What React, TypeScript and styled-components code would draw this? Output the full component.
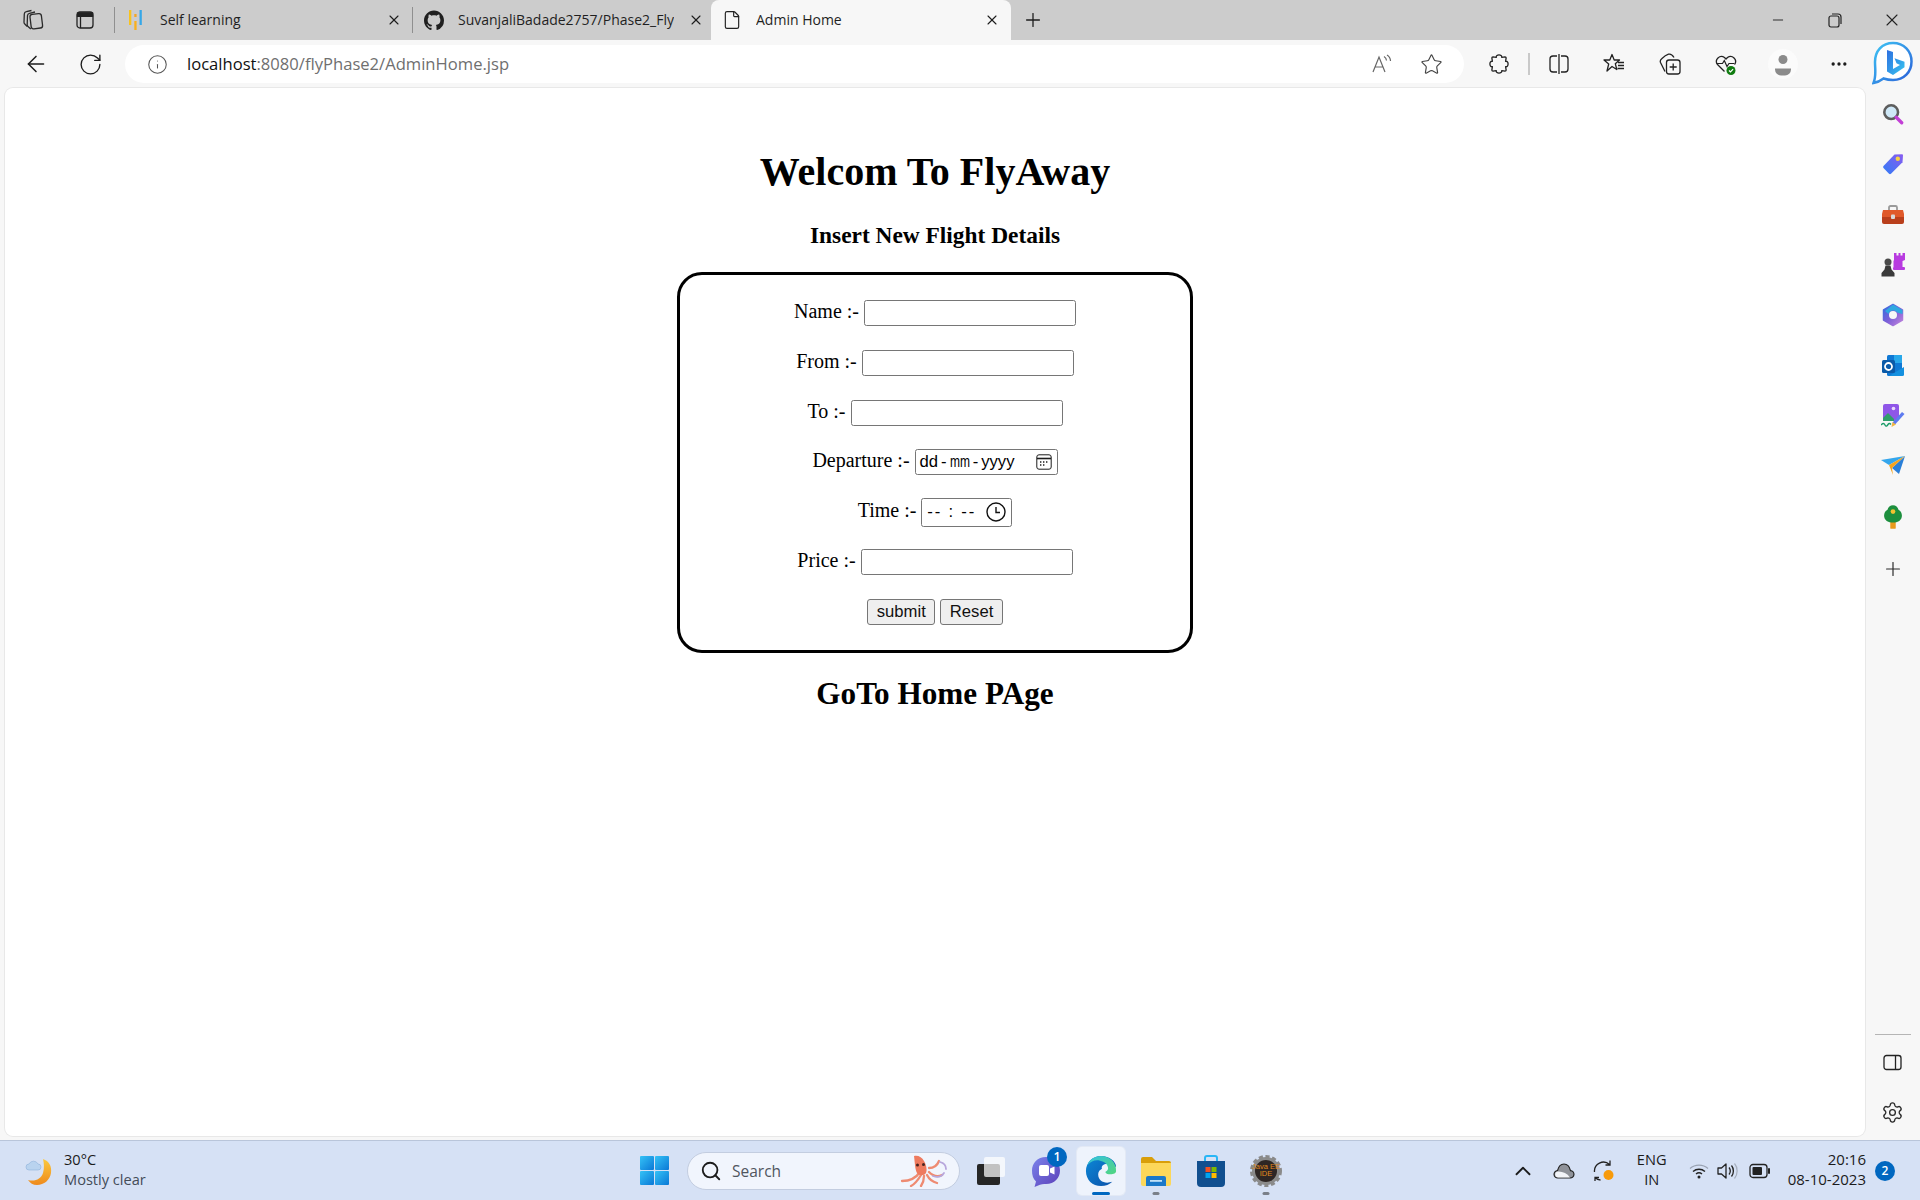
import React from "react";
import styled, { createGlobalStyle } from "styled-components";
import {
  ArrowLeft,
  RotateCw,
  Info,
  Star,
  MoreHorizontal,
  Plus,
  X,
  Minus,
  ChevronUp,
  Settings,
  Search,
  File,
} from "lucide-react";

const GlobalStyle = createGlobalStyle`
  html, body { margin: 0; padding: 0; height: 100%; }
  body { font-family: "Open Sans", "Noto Sans", sans-serif; background: #f7f7f7; overflow: hidden; }
`;

const Screen = styled.div`
  width: 1920px;
  height: 1200px;
  display: flex;
  flex-direction: column;
  background: #f7f7f7;
`;

/* ---- tab strip ---- */
const TabStrip = styled.div`
  height: 40px;
  background: #cccccc;
  display: flex;
  align-items: stretch;
  padding-left: 7px;
  flex-shrink: 0;
`;

const Slot = styled.div<{ $w: number }>`
  width: ${(p) => p.$w}px;
  flex-shrink: 0;
  display: flex;
  align-items: center;
  justify-content: center;
  color: #1c1c1c;
`;

const TabDivider = styled.div`
  width: 1px;
  height: 26px;
  margin: 7px 0 0;
  background: #8f8f8f;
  flex-shrink: 0;
`;

const Tab = styled.div<{ $active?: boolean; $w: number; $pr?: number }>`
  width: ${(p) => p.$w}px;
  flex-shrink: 0;
  display: flex;
  align-items: center;
  gap: 14px;
  padding: 0 ${(p) => p.$pr ?? 10}px 0 11px;
  box-sizing: border-box;
  border-radius: 8px 8px 0 0;
  background: ${(p) => (p.$active ? "#f7f7f7" : "transparent")};
`;

const TabIcon = styled.div`
  width: 20px;
  height: 20px;
  flex-shrink: 0;
  display: flex;
  align-items: center;
  justify-content: center;
`;

const TabTitle = styled.div`
  flex: 1;
  min-width: 0;
  padding-bottom: 2px;
  font-size: 14px;
  color: #1f1f1f;
  white-space: nowrap;
  overflow: hidden;
`;

const TabClose = styled(X)`
  flex-shrink: 0;
  color: #1c1c1c;
`;

const StripFill = styled.div`
  flex: 1;
`;

const WindowControl = styled(Slot)`
  color: #222222;
`;

/* ---- address toolbar ---- */
const Toolbar = styled.div`
  height: 48px;
  display: flex;
  align-items: center;
  padding-left: 8px;
  flex-shrink: 0;
`;

const AddressBar = styled.div`
  width: 1339px;
  height: 38px;
  margin: 0 7px 0 7px;
  flex-shrink: 0;
  background: #ffffff;
  border-radius: 19px;
  display: flex;
  align-items: center;
  box-sizing: border-box;
  padding-left: 22px;
`;

const Url = styled.div`
  margin-left: 19px;
  padding-bottom: 2px;
  flex: 1;
  font-size: 16.6px;
  color: #6f6f6f;
  white-space: nowrap;
`;

const UrlHost = styled.span`
  color: #111111;
`;

const ToolbarRule = styled.div`
  width: 2px;
  height: 22px;
  margin: 0 1px;
  background: #c9c9c9;
  flex-shrink: 0;
`;

/* ---- middle ---- */
const Middle = styled.div`
  flex: 1;
  min-height: 0;
  display: flex;
`;

const Page = styled.main`
  flex: 1;
  min-width: 0;
  margin: 0 0 4px 5px;
  background: #ffffff;
  border-radius: 8px;
  box-shadow: 0 0 0 1px #e8e8e8;
  padding-top: 61px;
  display: flex;
  flex-direction: column;
  align-items: center;
  font-family: "Liberation Serif", "Times New Roman", serif;
  color: #000000;
`;

const Title = styled.h1`
  margin: 0;
  font-size: 40px;
  line-height: 46px;
  font-weight: 700;
`;

const SubTitle = styled.h3`
  margin: 27px 0 23px;
  font-size: 23.4px;
  line-height: 27px;
  font-weight: 700;
`;

const FormBox = styled.form`
  width: 516px;
  box-sizing: border-box;
  border: 3px solid #000000;
  border-radius: 25px;
  padding: 25px 0;
  display: flex;
  flex-direction: column;
  gap: 23.8px;
`;

const FormRow = styled.div`
  height: 26px;
  display: flex;
  justify-content: center;
  align-items: center;
  gap: 5px;
  font-size: 20px;
`;

const FieldLabel = styled.label`
  position: relative;
  top: -1.5px;
  white-space: pre;
`;

const TextField = styled.input`
  width: 212px;
  height: 26px;
  box-sizing: border-box;
  border: 1px solid #767676;
  border-radius: 2.5px;
  background: #ffffff;
  padding: 0 2px;
  margin: 0;
`;

const PickerField = styled.div<{ $w: number; $h: number }>`
  width: ${(p) => p.$w}px;
  height: ${(p) => p.$h}px;
  flex-shrink: 0;
  box-sizing: border-box;
  border: 1px solid #767676;
  border-radius: 2.5px;
  display: flex;
  align-items: center;
  justify-content: space-between;
  padding: 0 5px 0 4px;
  font-family: "Liberation Sans", Arial, sans-serif;
  font-size: 16.67px;
  white-space: pre;
`;

const DateText = styled.span`
  display: inline-flex;
  align-items: center;
  gap: 3px;
`;

const DateMonth = styled.span`
  display: inline-block;
  width: 20px;
  transform: scaleX(0.72);
  transform-origin: left center;
`;

const TimeText = styled.span`
  margin-left: 1px;
  letter-spacing: 1.8px;
`;

const FormButton = styled.button`
  height: 26px;
  box-sizing: border-box;
  border: 1px solid #767676;
  border-radius: 3px;
  background: #efefef;
  padding: 0 8.5px;
  margin: 0;
  color: #111111;
  font-family: "Liberation Sans", Arial, sans-serif;
  font-size: 16.67px;
`;

const HomeLink = styled.h2`
  margin: 24px 0 0;
  font-size: 31.2px;
  line-height: 34px;
  font-weight: 700;
`;

/* ---- sidebar ---- */
const Sidebar = styled.aside`
  width: 55px;
  flex-shrink: 0;
  padding: 1px 0 5px;
  box-sizing: border-box;
  display: flex;
  flex-direction: column;
  align-items: center;
`;

const SideItem = styled.div<{ $h?: number }>`
  height: ${(p) => p.$h ?? 50.3}px;
  width: 100%;
  display: flex;
  align-items: center;
  justify-content: center;
  color: #2a2a2a;
`;

const SideFill = styled.div`
  flex: 1;
`;

const SideRule = styled.div`
  width: 36px;
  height: 1px;
  background: #b5b5b5;
`;

/* ---- taskbar ---- */
const Taskbar = styled.footer`
  height: 60px;
  flex-shrink: 0;
  box-sizing: border-box;
  border-top: 1px solid #b9c5da;
  background: #d6e1f5;
  display: grid;
  grid-template-columns: 640px auto 1fr;
  align-items: center;
`;

const Weather = styled.div`
  display: flex;
  align-items: center;
  padding-left: 25px;
  gap: 11px;
`;

const TwoLines = styled.div<{ $align?: string; $size?: number }>`
  display: flex;
  flex-direction: column;
  gap: 2px;
  padding-bottom: 3px;
  font-size: ${(p) => p.$size ?? 14.6}px;
  line-height: 18px;
  color: #1b1b1b;
  text-align: ${(p) => p.$align ?? "left"};
  white-space: nowrap;
`;

const Muted = styled.span`
  color: #444c58;
`;

const TaskCenter = styled.div`
  display: flex;
  align-items: center;
  gap: 7px;
`;

const StartButton = styled.div`
  width: 29px;
  height: 29px;
  margin-right: 11px;
  display: flex;
`;

const SearchPill = styled.div`
  width: 273px;
  height: 38px;
  box-sizing: border-box;
  border-radius: 19px;
  background: #f1f5fd;
  border: 1px solid #c3cde0;
  display: flex;
  align-items: center;
  padding: 0 11px 0 12px;
  gap: 10px;
  font-size: 15.5px;
  color: #50565f;
`;

const SearchWord = styled.span`
  flex: 1;
`;

const TaskItem = styled.div<{ $active?: boolean }>`
  position: relative;
  width: 48px;
  height: 48px;
  border-radius: 5px;
  display: flex;
  align-items: center;
  justify-content: center;
  background: ${(p) => (p.$active ? "#eef3fc" : "transparent")};
  box-shadow: ${(p) => (p.$active ? "0 0 0 1px #e3e9f5" : "none")};
`;

const RunDot = styled.span<{ $active?: boolean }>`
  position: absolute;
  bottom: 0;
  left: 50%;
  transform: translateX(-50%);
  height: 3px;
  width: ${(p) => (p.$active ? 18 : 7)}px;
  border-radius: 2px;
  background: ${(p) => (p.$active ? "#0067c0" : "#7a7f88")};
`;

const CountBadge = styled.span`
  position: absolute;
  top: 0;
  right: 3px;
  width: 20px;
  height: 20px;
  border-radius: 50%;
  background: #0067c0;
  color: #ffffff;
  font-size: 12.5px;
  font-weight: 600;
  display: flex;
  align-items: center;
  justify-content: center;
`;

const Tray = styled.div`
  display: flex;
  align-items: center;
  justify-content: flex-end;
  padding-right: 25px;
`;

const TrayClock = styled(TwoLines)`
  margin: 0 9px 0 7px;
`;

const NotifyBadge = styled.div`
  width: 20px;
  height: 20px;
  border-radius: 50%;
  background: #0067c0;
  color: #ffffff;
  font-size: 12px;
  font-weight: 600;
  display: flex;
  align-items: center;
  justify-content: center;
`;

/* ---- drawn icons ---- */
const CollectionsIcon = () => (
  <svg width="22" height="22" viewBox="0 0 22 22" fill="none" stroke="#2a2a2a" strokeWidth="1.3">
    <rect x="8.500" y="5" width="11.500" height="14.500" rx="2.500" transform="rotate(-7 14 12)" />
    <path d="M8.800 20 6 17.500a2.500 2.500 0 0 1-.8-1.800L5.500 6.500A2.500 2.500 0 0 1 7.500 4.300L13 3" />
    <path d="M5.300 17.500 2.800 15a2.500 2.500 0 0 1-.8-1.800L2.300 5A2.500 2.500 0 0 1 4.300 2.700L9.500 1.500" />
  </svg>
);

const VerticalTabsIcon = () => (
  <svg width="18" height="18" viewBox="0 0 18 18" fill="none" stroke="#222" strokeWidth="1.3">
    <rect x="1" y="1" width="16" height="16" rx="3" />
    <path d="M1.500 1.800h15v3.500h-15z" fill="#222" />
    <path d="M4.500 5v12" />
  </svg>
);

const SelfLearningIcon = () => (
  <svg width="14" height="20" viewBox="0 0 14 20">
    <rect x="0" y="0" width="2.300" height="15" fill="#f9c31d" />
    <rect x="5.300" y="4" width="2.300" height="3" fill="#f5a623" />
    <rect x="5.300" y="11" width="2.300" height="9" fill="#f9b01d" />
    <rect x="10.500" y="0" width="2.300" height="15" fill="#35a7e8" />
  </svg>
);

const GithubMark = () => (
  <svg width="21" height="21" viewBox="0 0 16 16" fill="#1f1f1f">
    <path d="M8 0C3.58 0 0 3.58 0 8c0 3.54 2.29 6.53 5.47 7.59.4.07.55-.17.55-.38 0-.19-.01-.82-.01-1.49-2.01.37-2.53-.49-2.69-.94-.09-.23-.48-.94-.82-1.13-.28-.15-.68-.52-.01-.53.63-.01 1.08.58 1.23.82.72 1.21 1.87.87 2.33.66.07-.52.28-.87.51-1.07-1.78-.2-3.64-.89-3.64-3.95 0-.87.31-1.59.82-2.15-.08-.2-.36-1.02.08-2.12 0 0 .67-.21 2.2.82.64-.18 1.32-.27 2-.27s1.36.09 2 .27c1.53-1.04 2.2-.82 2.2-.82.44 1.1.16 1.92.08 2.12.51.56.82 1.27.82 2.15 0 3.07-1.87 3.75-3.65 3.95.29.25.54.73.54 1.48 0 1.07-.01 1.93-.01 2.2 0 .21.15.46.55.38A8.01 8.01 0 0 0 16 8c0-4.42-3.58-8-8-8z" />
  </svg>
);

const RestoreIcon = () => (
  <svg width="14" height="16" viewBox="0 0 14 16" fill="none" stroke="#222" strokeWidth="1.2">
    <rect x="1" y="4" width="10" height="11" rx="2" />
    <path d="M4 2h6a3 3 0 0 1 3 3v7" />
  </svg>
);

const ReadAloudIcon = () => (
  <svg width="22" height="20" viewBox="0 0 22 20" fill="none" stroke="#666" strokeWidth="1.2">
    <path d="M1 18 7 3l6 15M3.200 13h7.600" />
    <path d="M12 2.500c1.600 1 2.400 2.400 2.500 4M15 1c2.200 1.300 3.400 3.300 3.500 6" />
  </svg>
);

const ExtensionIcon = () => (
  <svg width="22" height="22" viewBox="0 0 20 20" fill="none" stroke="#222" strokeWidth="1.2" strokeLinejoin="round">
    <path d="M7.500 4C7 1 13 1 12.500 4L15.500 3.500Q16.500 3.500 16.500 4.500L16 7.500C19 7 19 13 16 12.500L16.500 15.500Q16.500 16.500 15.500 16.500L12.500 16C13 19 7 19 7.500 16L4.500 16.500Q3.500 16.500 3.500 15.500L4 12.500C1 13 1 7 4 7.500L3.500 4.500Q3.500 3.500 4.500 3.500Z" />
  </svg>
);

const SplitIcon = () => (
  <svg width="20" height="22" viewBox="0 0 20 22" fill="none" stroke="#222" strokeWidth="1.3">
    <path d="M8 3H4a3 3 0 0 0-3 3v10a3 3 0 0 0 3 3h4M12 3h4a3 3 0 0 1 3 3v10a3 3 0 0 1-3 3h-4" />
    <path d="M10 1v20" />
  </svg>
);

const FavoritesIcon = () => (
  <svg width="22" height="22" viewBox="0 0 22 22" fill="none" stroke="#222" strokeWidth="1.3">
    <path d="M9 1.500l2.200 5.500h5.300l-4.200 3.700 1.500 5.800-4.800-3-5 4.500 1.700-7L1 7h5.800z" strokeLinejoin="round" />
    <path d="M15 9.500h6M15 12.500h6M14.500 15.500h6.500" />
  </svg>
);

const CollectionAddIcon = () => (
  <svg width="22" height="22" viewBox="0 0 22 22" fill="none" stroke="#222" strokeWidth="1.3">
    <rect x="7.500" y="7" width="13.500" height="14" rx="2.500" />
    <path d="M14.200 10.500v7M10.700 14h7" />
    <path d="M6 18.500 1.500 9.500c-.6-1.500 0-2.800 1.200-3.800C4.500 4 7 2 9.500 1.200c2-.6 4 .8 5.500 3.300" />
  </svg>
);

const HealthIcon = () => (
  <svg width="24" height="24" viewBox="0 0 24 24" fill="none">
    <path d="M10.500 19.500 3.500 12.500a5 5 0 0 1 7-7l1.500 1.500 1.500-1.500a5 5 0 0 1 7 7" stroke="#222" strokeWidth="1.300" />
    <path d="M2.500 11.500h6l1.800-3 2.700 6 2-3h5" stroke="#222" strokeWidth="1.200" />
    <circle cx="17" cy="18.500" r="4.500" fill="#107c10" />
    <path d="m15 18.500 1.500 1.500 2.600-2.800" stroke="#fff" strokeWidth="1.200" />
  </svg>
);

const ProfileIcon = () => (
  <svg width="30" height="30" viewBox="0 0 30 30">
    <circle cx="15" cy="15" r="15" fill="#fbfbfb" />
    <circle cx="15" cy="10.500" r="4.500" fill="#8b8b8b" />
    <path d="M7 19.500h16v1a6 6 0 0 1-6 6h-4a6 6 0 0 1-6-6z" fill="#8b8b8b" />
  </svg>
);

const BingIcon = () => (
  <svg width="42" height="46" viewBox="0 0 42 46">
    <defs>
      <linearGradient id="bingRing" x1="0" y1="0" x2="1" y2="1">
        <stop offset="0" stopColor="#3fc5f4" />
        <stop offset="1" stopColor="#2a5fd8" />
      </linearGradient>
      <linearGradient id="bingB" x1="0" y1="0" x2="1" y2="1">
        <stop offset="0" stopColor="#2f6fe0" />
        <stop offset="1" stopColor="#37c6f0" />
      </linearGradient>
    </defs>
    <path d="M21 2C10 2 3 10 3 21c0 7 1.500 14-1.500 21 4-.5 8-3 10-4.500 3 1 6 1.500 9.500 1.500 11 0 18.500-8 18.500-18.500S32 2 21 2z" fill="#fff" stroke="url(#bingRing)" strokeWidth="2.500" />
    <path d="M15 9l6 2v17l7-4-3.500-1.800-2-5 10 3.600v5.500L21 34l-6-3.500z" fill="url(#bingB)" />
  </svg>
);

const SideSearch = () => (
  <svg width="22" height="22" viewBox="0 0 24 24">
    <circle cx="10" cy="10" r="7.500" fill="#cfe8f7" stroke="#5d5d5d" strokeWidth="2.800" />
    <path d="m15.500 15.500 6 6" stroke="#c23fd6" strokeWidth="3.600" strokeLinecap="round" />
  </svg>
);

const SideTag = () => (
  <svg width="22" height="22" viewBox="0 0 22 22">
    <defs>
      <linearGradient id="tagFill" x1="0" y1="1" x2="1" y2="0">
        <stop offset="0" stopColor="#2f7cf6" />
        <stop offset="1" stopColor="#8a5cf0" />
      </linearGradient>
    </defs>
    <path d="M1.500 13 12.500 1.500 20 1.200a1 1 0 0 1 1 1l-.5 7L9 20.800a1.500 1.500 0 0 1-2 0L1.500 15a1.500 1.500 0 0 1 0-2z" fill="url(#tagFill)" />
    <circle cx="15.800" cy="5.800" r="2.200" fill="#f7d046" />
  </svg>
);

const SideToolbox = () => (
  <svg width="24" height="20" viewBox="0 0 24 20">
    <path d="M8 5V2.500A1.500 1.500 0 0 1 9.500 1h5A1.500 1.500 0 0 1 16 2.500V5" fill="none" stroke="#9a9a9a" strokeWidth="1.800" />
    <path d="M2 5h20l1 4v3H1V9z" fill="#e0592a" />
    <path d="M1 12h22v5a2 2 0 0 1-2 2H3a2 2 0 0 1-2-2z" fill="#b93f1c" />
    <rect x="10" y="9.500" width="4" height="4.500" rx="1" fill="#d9d9d9" />
  </svg>
);

const SideChess = () => (
  <svg width="24" height="24" viewBox="0 0 24 24">
    <path d="M13 0h2.500v2.500h2V0h2v2.500h2V0H24v7l-2.500 1v6h-9V8L13 7z" fill="#b83be0" />
    <rect x="12" y="14" width="12" height="3" rx="1" fill="#b83be0" />
    <circle cx="7" cy="9" r="3.500" fill="#4a4a4a" />
    <path d="M4.500 12.500h5l1 4 3 3.500v3.500H.5V20l3-3.500z" fill="#3a3a3a" />
  </svg>
);

const SideOffice = () => (
  <svg width="22" height="24" viewBox="0 0 22 24" fill="none">
    <defs>
      <linearGradient id="officeRing" x1="0" y1="0" x2="1" y2="1">
        <stop offset="0" stopColor="#2f6fe0" />
        <stop offset=".5" stopColor="#7d5fd8" />
        <stop offset="1" stopColor="#c486dc" />
      </linearGradient>
    </defs>
    <path d="M11 1.500 20.500 7v10L11 22.500 1.500 17V7z" fill="url(#officeRing)" stroke="url(#officeRing)" strokeWidth="1.500" strokeLinejoin="round" />
    <path d="M11 1.500 20.500 7v4L15 9.500C14 8 12.500 7.500 11 7.500 9 7.500 7 9 6.500 11L3 8z" fill="#2fa8e0" />
    <circle cx="11" cy="12" r="4" fill="#f7f7f7" />
  </svg>
);

const SideOutlook = () => (
  <svg width="22" height="22" viewBox="0 0 22 22">
    <rect x="5" y="0" width="15" height="21" rx="1.500" fill="#0f78d4" />
    <rect x="12" y="0" width="8" height="8" fill="#28a8ea" />
    <path d="M7 21l15-9v7.500a1.500 1.500 0 0 1-1.500 1.500z" fill="#1490df" />
    <rect x="0" y="5" width="13" height="13" rx="1.500" fill="#0a5aa8" />
    <circle cx="6.500" cy="11.500" r="3.500" fill="none" stroke="#fff" strokeWidth="1.800" />
  </svg>
);

const SideDesigner = () => (
  <svg width="24" height="24" viewBox="0 0 24 24">
    <rect x="2" y="0" width="16" height="17" rx="2" fill="#8f56e8" />
    <circle cx="12.500" cy="4.500" r="1.800" fill="#e8d9fb" />
    <path d="M2 14l5-5 6 6v2H2z" fill="#2f9e6b" />
    <path d="M0 21c2-2 3-2 4 0s2 1 3-.5 2-1 3 0" fill="none" stroke="#1e9d6a" strokeWidth="1.400" />
    <path d="m12 18 9-10 2.500 2-9 10-3 1z" fill="#5d7bf0" />
    <path d="m10.500 23 1-5 3.500 2.500z" fill="#f2b640" />
  </svg>
);

const SideSend = () => (
  <svg width="24" height="20" viewBox="0 0 24 20">
    <path d="M0 4 24 0 8 9z" fill="#35a6ec" />
    <path d="M24 0 18 18l-7-6z" fill="#2a7fd8" />
    <path d="M8 9 24 0 11 12l1 7z" fill="#f3a31f" />
  </svg>
);

const SideTree = () => (
  <svg width="20" height="24" viewBox="0 0 22 26">
    <rect x="8" y="17" width="6" height="9" rx="1" fill="#e89a1c" />
    <path d="M11 0c3 0 5.500 2 6 5 3 1.500 4.500 5 3.500 8.500-1 3.500-4 5.500-9.500 5.500s-8.500-2-9.500-5.500C.5 10 2 6.500 5 5c.5-3 3-5 6-5z" fill="#1d8f3e" />
    <circle cx="11" cy="7" r="2.600" fill="#f2c230" />
  </svg>
);

const PanelIcon = () => (
  <svg width="19" height="17" viewBox="0 0 19 17" fill="none" stroke="#222" strokeWidth="1.300">
    <rect x="1" y="1.500" width="17" height="14" rx="2.500" />
    <path d="M12.500 1.500v14" />
  </svg>
);

const CalendarIcon = () => (
  <svg width="16" height="16" viewBox="0 0 16 16" fill="none" stroke="#1c1c1c">
    <rect x=".8" y=".8" width="14.400" height="14.400" rx="2.200" />
    <path d="M1 4.500h14" strokeWidth="1.600" />
    <path d="M4 8h1.400M7 8h1.400M10 8h1.400M4 11h1.400M7 11h1.400" strokeWidth="1.300" />
  </svg>
);

const ClockIcon = () => (
  <svg width="20" height="20" viewBox="0 0 20 20" fill="none" stroke="#111" strokeWidth="1.400">
    <circle cx="10" cy="10" r="9" />
    <path d="M10 5v5.500h4" />
  </svg>
);

const WeatherIcon = () => (
  <svg width="28" height="30" viewBox="0 0 28 30">
    <defs>
      <linearGradient id="moonFill" x1="0" y1="0" x2="0" y2="1">
        <stop offset="0" stopColor="#fbc93f" />
        <stop offset="1" stopColor="#ee8a1d" />
      </linearGradient>
    </defs>
    <path d="M18 3c6 2 9 7 8 14-1 7-7 12-14 12-4 0-7-2-9-5 7 2 13-1 15-7 1.500-5 1-10 0-14z" fill="url(#moonFill)" />
    <path d="M4 14a3 3 0 0 1 0-6 5 5 0 0 1 9 0 3 3 0 0 1 0 6z" fill="#b9d3ef" stroke="#8fb1da" strokeWidth=".6" />
  </svg>
);

const StartLogo = () => (
  <svg width="29" height="29" viewBox="0 0 29 29">
    <defs>
      <linearGradient id="winFill" x1="0" y1="0" x2="1" y2="1">
        <stop offset="0" stopColor="#35c2f6" />
        <stop offset="1" stopColor="#0a78d6" />
      </linearGradient>
    </defs>
    <rect x="0" y="0" width="14" height="14" rx="1" fill="url(#winFill)" />
    <rect x="15" y="0" width="14" height="14" rx="1" fill="url(#winFill)" />
    <rect x="0" y="15" width="14" height="14" rx="1" fill="url(#winFill)" />
    <rect x="15" y="15" width="14" height="14" rx="1" fill="url(#winFill)" />
  </svg>
);

const OctopusIcon = () => (
  <svg width="48" height="33" viewBox="0 0 48 33" fill="none">
    <path d="M20 18c-4 6-10 9-18 9M21 21c-3 5-6 9-10 11M24 22c0 4-1 7-3 10M27 21c2 4 6 7 10 8M29 18c4 4 9 5 13 3M29 14c5 0 8-2 10-7" stroke="#ee8b72" strokeWidth="2.300" strokeLinecap="round" />
    <path d="M40 8c4 1 6 4 6 7M33 22c5 2 9 0 11-3" stroke="#b7a6dc" strokeWidth="1.800" strokeLinecap="round" />
    <path d="M14 2c4-1 8 1 10 5 3 5 3 10 2 12-2 3-7 3-9 0-2-4-2-9-3-17z" fill="#ee7a5f" />
    <circle cx="17.500" cy="11" r="1.500" fill="#4a2320" />
    <circle cx="23.500" cy="10.500" r="1.500" fill="#4a2320" />
  </svg>
);

const TaskViewIcon = () => (
  <svg width="30" height="30" viewBox="0 0 30 30">
    <rect x="1" y="8" width="23" height="21" rx="2" fill="#262626" />
    <rect x="8" y="1" width="21" height="20" rx="2" fill="#ffffff" opacity=".72" />
  </svg>
);

const TeamsIcon = () => (
  <svg width="30" height="32" viewBox="0 0 30 32">
    <defs>
      <linearGradient id="teamsFill" x1="0" y1="0" x2="1" y2="1">
        <stop offset="0" stopColor="#7b83eb" />
        <stop offset="1" stopColor="#5b3fb8" />
      </linearGradient>
    </defs>
    <path d="M15 2c8.500 0 14 6 14 13.500S23.500 29 15 29c-2 0-4-.2-6 .8L3.500 32 5 26.500C2 24 1 20 1 15.500 1 8 6.500 2 15 2z" fill="url(#teamsFill)" />
    <rect x="8" y="10" width="10" height="11" rx="2" fill="#fff" />
    <path d="m19 13.500 4.500-2v8L19 17.500z" fill="#fff" />
  </svg>
);

const EdgeIcon = () => (
  <svg width="32" height="32" viewBox="0 0 34 34">
    <defs>
      <linearGradient id="edgeDeep" x1="0" y1="0" x2="1" y2="1">
        <stop offset="0" stopColor="#0c8ad8" />
        <stop offset="1" stopColor="#0b4fa8" />
      </linearGradient>
      <linearGradient id="edgeLight" x1="0" y1="0" x2="1" y2="1">
        <stop offset="0" stopColor="#34c1e0" />
        <stop offset="1" stopColor="#52d67e" />
      </linearGradient>
    </defs>
    <path d="M17 1C8 1 1 8 1 17c0 9.500 7 16 16 16 5 0 9-1.500 12-4.500-8 2.500-15-.5-15-8 0-3 2-5 4-6-1-3 2-5 5-5 5 0 6 3 10 3C33 7 26 1 17 1z" fill="url(#edgeDeep)" />
    <path d="M33 17c.5-9-7-16-16-16C10 1 4.500 5 2.500 11c4-5 9-6 13.500-5 5 1 8.500 4 8.500 8 0 2-1.500 3-3 4 1 2 3 2.500 5.500 2.500 3.500 0 6-1 6-3.500z" fill="url(#edgeLight)" />
  </svg>
);

const FolderIcon = () => (
  <svg width="32" height="30" viewBox="0 0 32 30">
    <path d="M1 3a2 2 0 0 1 2-2h9l4 4h13a2 2 0 0 1 2 2v6H1z" fill="#d99e0a" />
    <path d="M1 7h30v21a2 2 0 0 1-2 2H3a2 2 0 0 1-2-2z" fill="#fcd75a" />
    <path d="M6 22a2 2 0 0 1 2-2h16a2 2 0 0 1 2 2v8H6z" fill="#1a78c9" />
    <rect x="10" y="24" width="12" height="1.800" fill="#bfe0f7" />
  </svg>
);

const StoreIcon = () => (
  <svg width="30" height="32" viewBox="0 0 30 32">
    <path d="M9 7V3a2 2 0 0 1 2-2h8a2 2 0 0 1 2 2v4" fill="none" stroke="#29b6f6" strokeWidth="2" />
    <path d="M1 6h28v22a4 4 0 0 1-4 4H5a4 4 0 0 1-4-4z" fill="#114f8f" />
    <rect x="9.500" y="12" width="5" height="5" fill="#f25022" />
    <rect x="15.500" y="12" width="5" height="5" fill="#7fba00" />
    <rect x="9.500" y="18" width="5" height="5" fill="#00a4ef" />
    <rect x="15.500" y="18" width="5" height="5" fill="#ffb900" />
  </svg>
);

const EclipseIdeIcon = () => (
  <svg width="32" height="32" viewBox="0 0 32 32">
    <circle cx="16" cy="16" r="14" fill="#8d8d8d" stroke="#8a8a8a" strokeWidth="4" strokeDasharray="4 2.500" />
    <circle cx="16" cy="16" r="11" fill="#2e2624" />
    <text x="16" y="14" textAnchor="middle" fontFamily="Liberation Sans" fontSize="7.500" fill="#e08a1e">Java EE</text>
    <text x="16" y="21" textAnchor="middle" fontFamily="Liberation Sans" fontSize="7.500" fill="#e08a1e">IDE</text>
  </svg>
);

const CloudTrayIcon = () => (
  <svg width="22" height="16" viewBox="0 0 22 16">
    <path d="M5 15a3.700 3.700 0 0 1-.5-7.400C5.500 3.500 8 1 11 1s5.500 2.500 6.500 6.600a3.700 3.700 0 0 1-.5 7.400z" fill="#8f9299" stroke="#222" strokeWidth="1.200" />
    <path d="M5 14.400a3 3 0 0 1-1-5.800c5-.6 10 1.500 13 5.800z" fill="#f2f4f8" />
  </svg>
);

const SyncTrayIcon = () => (
  <svg width="22" height="22" viewBox="0 0 22 22" fill="none">
    <path d="M1.500 12a9 9 0 0 1 15-7.500M17 0.500v4.500h-4.500M2 21v-3.500h4M2 17.500c1.500 1.500 3.500 2.500 5.500 2.500" stroke="#222" strokeWidth="1.300" />
    <circle cx="15.500" cy="15" r="5" fill="#f79a0a" />
  </svg>
);

const WifiTrayIcon = () => (
  <svg width="20" height="16" viewBox="0 0 20 16" fill="none">
    <path d="M1 5.500C6 1 14 1 19 5.500" stroke="#9aa3b3" strokeWidth="1.200" />
    <path d="M4 8.500c3.500-3 8.500-3 12 0M7 11c1.800-1.500 4.200-1.500 6 0" stroke="#222" strokeWidth="1.400" />
    <circle cx="10" cy="14" r="1.500" fill="#222" />
  </svg>
);

const VolumeTrayIcon = () => (
  <svg width="22" height="20" viewBox="0 0 22 20" fill="none">
    <path d="M1 7v6h3.500L9 17V3L4.500 7z" stroke="#222" strokeWidth="1.300" strokeLinejoin="round" />
    <path d="M12 6.500c1.500 2 1.500 5 0 7M14.500 4.500c2.500 3 2.500 8 0 11" stroke="#222" strokeWidth="1.300" />
    <path d="M17.500 2.500c3.500 4 3.500 11 0 15" stroke="#a7afbd" strokeWidth="1.200" />
  </svg>
);

const BatteryTrayIcon = () => (
  <svg width="22" height="16" viewBox="0 0 22 16" fill="none">
    <rect x="1" y="1.500" width="17" height="13" rx="3" stroke="#222" strokeWidth="1.300" />
    <rect x="3.500" y="4" width="9.500" height="8" rx="1" fill="#222" />
    <path d="M20 6v4" stroke="#222" strokeWidth="2" strokeLinecap="round" />
  </svg>
);

const sideApps = [SideSearch, SideTag, SideToolbox, SideChess, SideOffice, SideOutlook, SideDesigner, SideSend, SideTree];

const toolbarIcons = [
  { Icon: SplitIcon, w: 55.5 },
  { Icon: FavoritesIcon, w: 55.5 },
  { Icon: CollectionAddIcon, w: 55.5 },
  { Icon: HealthIcon, w: 57.5 },
  { Icon: ProfileIcon, w: 55.5 },
];

export default function App() {
  return (
    <Screen>
      <GlobalStyle />
      <TabStrip>
        <Slot $w={52}>
          <CollectionsIcon />
        </Slot>
        <Slot $w={52}>
          <VerticalTabsIcon />
        </Slot>
        <Slot $w={3} />
        <TabDivider />
        <Tab $w={297}>
          <TabIcon>
            <SelfLearningIcon />
          </TabIcon>
          <TabTitle>Self learning</TabTitle>
          <TabClose size={16} strokeWidth={1.6} />
        </Tab>
        <TabDivider />
        <Tab $w={298} $pr={7}>
          <TabIcon>
            <GithubMark />
          </TabIcon>
          <TabTitle>SuvanjaliBadade2757/Phase2_Fly</TabTitle>
          <TabClose size={16} strokeWidth={1.6} />
        </Tab>
        <Tab $active $w={300} $pr={11}>
          <TabIcon>
            <File size={20} strokeWidth={1.4} color="#222" />
          </TabIcon>
          <TabTitle>Admin Home</TabTitle>
          <TabClose size={16} strokeWidth={1.6} />
        </Tab>
        <Slot $w={44}>
          <Plus size={22} strokeWidth={1.4} />
        </Slot>
        <StripFill />
        <WindowControl $w={57}>
          <Minus size={16} strokeWidth={1.4} />
        </WindowControl>
        <WindowControl $w={57}>
          <RestoreIcon />
        </WindowControl>
        <WindowControl $w={57}>
          <X size={20} strokeWidth={1.3} />
        </WindowControl>
      </TabStrip>

      <Toolbar>
        <Slot $w={55}>
          <ArrowLeft size={26} strokeWidth={1.4} />
        </Slot>
        <Slot $w={55}>
          <RotateCw size={25} strokeWidth={1.3} />
        </Slot>
        <AddressBar>
          <Info size={21} strokeWidth={1.2} color="#555" />
          <Url>
            <UrlHost>localhost</UrlHost>:8080/flyPhase2/AdminHome.jsp
          </Url>
          <Slot $w={49}>
            <ReadAloudIcon />
          </Slot>
          <Slot $w={49}>
            <Star size={23} strokeWidth={1.2} color="#444" />
          </Slot>
          <Slot $w={8} />
        </AddressBar>
        <Slot $w={56}>
          <ExtensionIcon />
        </Slot>
        <ToolbarRule />
        {toolbarIcons.map(({ Icon, w }, i) => (
          <Slot $w={w} key={i}>
            <Icon />
          </Slot>
        ))}
        <Slot $w={57}>
          <MoreHorizontal size={20} strokeWidth={2} />
        </Slot>
        <Slot $w={50}>
          <BingIcon />
        </Slot>
      </Toolbar>

      <Middle>
        <Page>
          <Title>Welcom To FlyAway</Title>
          <SubTitle>Insert New Flight Details</SubTitle>
          <FormBox>
            <FormRow>
              <FieldLabel>Name :-</FieldLabel>
              <TextField type="text" />
            </FormRow>
            <FormRow>
              <FieldLabel>From :-</FieldLabel>
              <TextField type="text" />
            </FormRow>
            <FormRow>
              <FieldLabel>To :-</FieldLabel>
              <TextField type="text" />
            </FormRow>
            <FormRow>
              <FieldLabel>Departure :-</FieldLabel>
              <PickerField $w={143} $h={26}>
                <DateText>
                  <span>dd</span>
                  <span>-</span>
                  <DateMonth>mm</DateMonth>
                  <span>-</span>
                  <span>yyyy</span>
                </DateText>
                <CalendarIcon />
              </PickerField>
            </FormRow>
            <FormRow>
              <FieldLabel>Time :-</FieldLabel>
              <PickerField $w={91} $h={29}>
                <TimeText>-- : --</TimeText>
                <ClockIcon />
              </PickerField>
            </FormRow>
            <FormRow>
              <FieldLabel>Price :-</FieldLabel>
              <TextField type="text" />
            </FormRow>
            <FormRow>
              <FormButton type="button">submit</FormButton>
              <FormButton type="button">Reset</FormButton>
            </FormRow>
          </FormBox>
          <HomeLink>GoTo Home PAge</HomeLink>
        </Page>

        <Sidebar>
          {sideApps.map((Icon, i) => (
            <SideItem key={i}>
              <Icon />
            </SideItem>
          ))}
          <SideItem $h={55}>
            <Plus size={22} strokeWidth={1.3} />
          </SideItem>
          <SideFill />
          <SideRule />
          <SideItem $h={54}>
            <PanelIcon />
          </SideItem>
          <SideItem $h={46}>
            <Settings size={23} strokeWidth={1.4} />
          </SideItem>
        </Sidebar>
      </Middle>

      <Taskbar>
        <Weather>
          <WeatherIcon />
          <TwoLines>
            <span>30°C</span>
            <Muted>Mostly clear</Muted>
          </TwoLines>
        </Weather>
        <TaskCenter>
          <StartButton>
            <StartLogo />
          </StartButton>
          <SearchPill>
            <Search size={22} strokeWidth={2} color="#1c1c1c" />
            <SearchWord>Search</SearchWord>
            <OctopusIcon />
          </SearchPill>
          <TaskItem>
            <TaskViewIcon />
          </TaskItem>
          <TaskItem>
            <TeamsIcon />
            <CountBadge>1</CountBadge>
          </TaskItem>
          <TaskItem $active>
            <EdgeIcon />
            <RunDot $active />
          </TaskItem>
          <TaskItem>
            <FolderIcon />
            <RunDot />
          </TaskItem>
          <TaskItem>
            <StoreIcon />
          </TaskItem>
          <TaskItem>
            <EclipseIdeIcon />
            <RunDot />
          </TaskItem>
        </TaskCenter>
        <Tray>
          <Slot $w={40}>
            <ChevronUp size={26} strokeWidth={1.7} />
          </Slot>
          <Slot $w={42}>
            <CloudTrayIcon />
          </Slot>
          <Slot $w={38}>
            <SyncTrayIcon />
          </Slot>
          <Slot $w={58}>
            <TwoLines $align="center">
              <span>ENG</span>
              <span>IN</span>
            </TwoLines>
          </Slot>
          <Slot $w={36}>
            <WifiTrayIcon />
          </Slot>
          <Slot $w={22}>
            <VolumeTrayIcon />
          </Slot>
          <Slot $w={42}>
            <BatteryTrayIcon />
          </Slot>
          <TrayClock $align="right" $size={15}>
            <span>20:16</span>
            <span>08-10-2023</span>
          </TrayClock>
          <NotifyBadge>2</NotifyBadge>
        </Tray>
      </Taskbar>
    </Screen>
  );
}
